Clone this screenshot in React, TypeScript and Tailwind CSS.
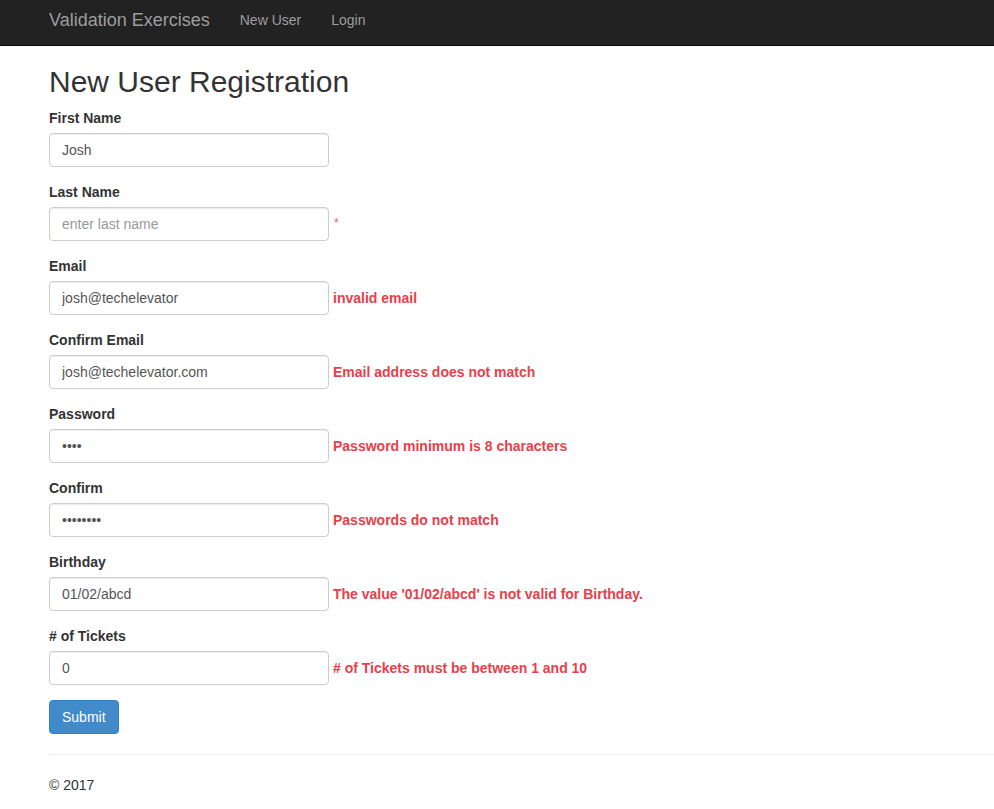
import React from "react";

const font = { fontFamily: '"Liberation Sans", Arial, Helvetica, sans-serif' };

type Field = {
  label: string;
  value?: string;
  placeholder?: string;
  type?: string;
  error?: string;
  star?: boolean;
};

const fields: Field[] = [
  { label: "First Name", value: "Josh" },
  { label: "Last Name", placeholder: "enter last name", star: true },
  { label: "Email", value: "josh@techelevator", error: "invalid email" },
  { label: "Confirm Email", value: "josh@techelevator.com", error: "Email address does not match" },
  { label: "Password", value: "abcd", type: "password", error: "Password minimum is 8 characters" },
  { label: "Confirm", value: "abcdefgh", type: "password", error: "Passwords do not match" },
  { label: "Birthday", value: "01/02/abcd", error: "The value '01/02/abcd' is not valid for Birthday." },
  { label: "# of Tickets", value: "0", error: "# of Tickets must be between 1 and 10" },
];

export default function App() {
  return (
    <div className="min-h-[809px] bg-white text-[14px] leading-[20px] text-[#333]" style={font}>
      <nav className="h-[46px] bg-[#222] border-b border-[#080808] flex items-start pt-[10px] pl-[49px]">
        <span className="text-[18px] text-[#9d9d9d] leading-[20px]">Validation Exercises</span>
        <span className="ml-[30px] text-[#9d9d9d]">New User</span>
        <span className="ml-[30px] text-[#9d9d9d]">Login</span>
      </nav>
      <main className="pl-[49px]">
        <h1 className="mt-[19px] mb-[10px] text-[30px] leading-[33px] font-normal text-[#333]">New User Registration</h1>
        <form onSubmit={(e) => e.preventDefault()}>
          {fields.map((f) => (
            <div key={f.label} className="mb-[15px]">
              <label className="block font-bold mb-[5px] text-[#333]">{f.label}</label>
              <div className="flex items-center">
                <input
                  readOnly
                  type={f.type ?? "text"}
                  defaultValue={f.value}
                  placeholder={f.placeholder}
                  className="w-[280px] h-[34px] px-[12px] py-[6px] border border-[#ccc] rounded-[4px] text-[14px] text-[#555] placeholder:text-[#999] shadow-[inset_0_1px_1px_rgba(0,0,0,0.075)] outline-none"
                  style={font}
                />
                {f.error && <span className="ml-[4px] font-bold text-[#e8404a]">{f.error}</span>}
                {f.star && <span className="ml-[5px] text-[12px] text-[#e8606a] -mt-[2px]">*</span>}
              </div>
            </div>
          ))}
          <button
            type="submit"
            className="h-[34px] px-[12px] bg-[#428bca] border border-[#357ebd] rounded-[4px] text-white text-[14px]"
            style={font}
          >
            Submit
          </button>
        </form>
        <hr className="mt-[20px] mb-[20px] border-0 border-t border-[#eee]" />
        <footer className="text-[#333]">© 2017</footer>
      </main>
    </div>
  );
}
